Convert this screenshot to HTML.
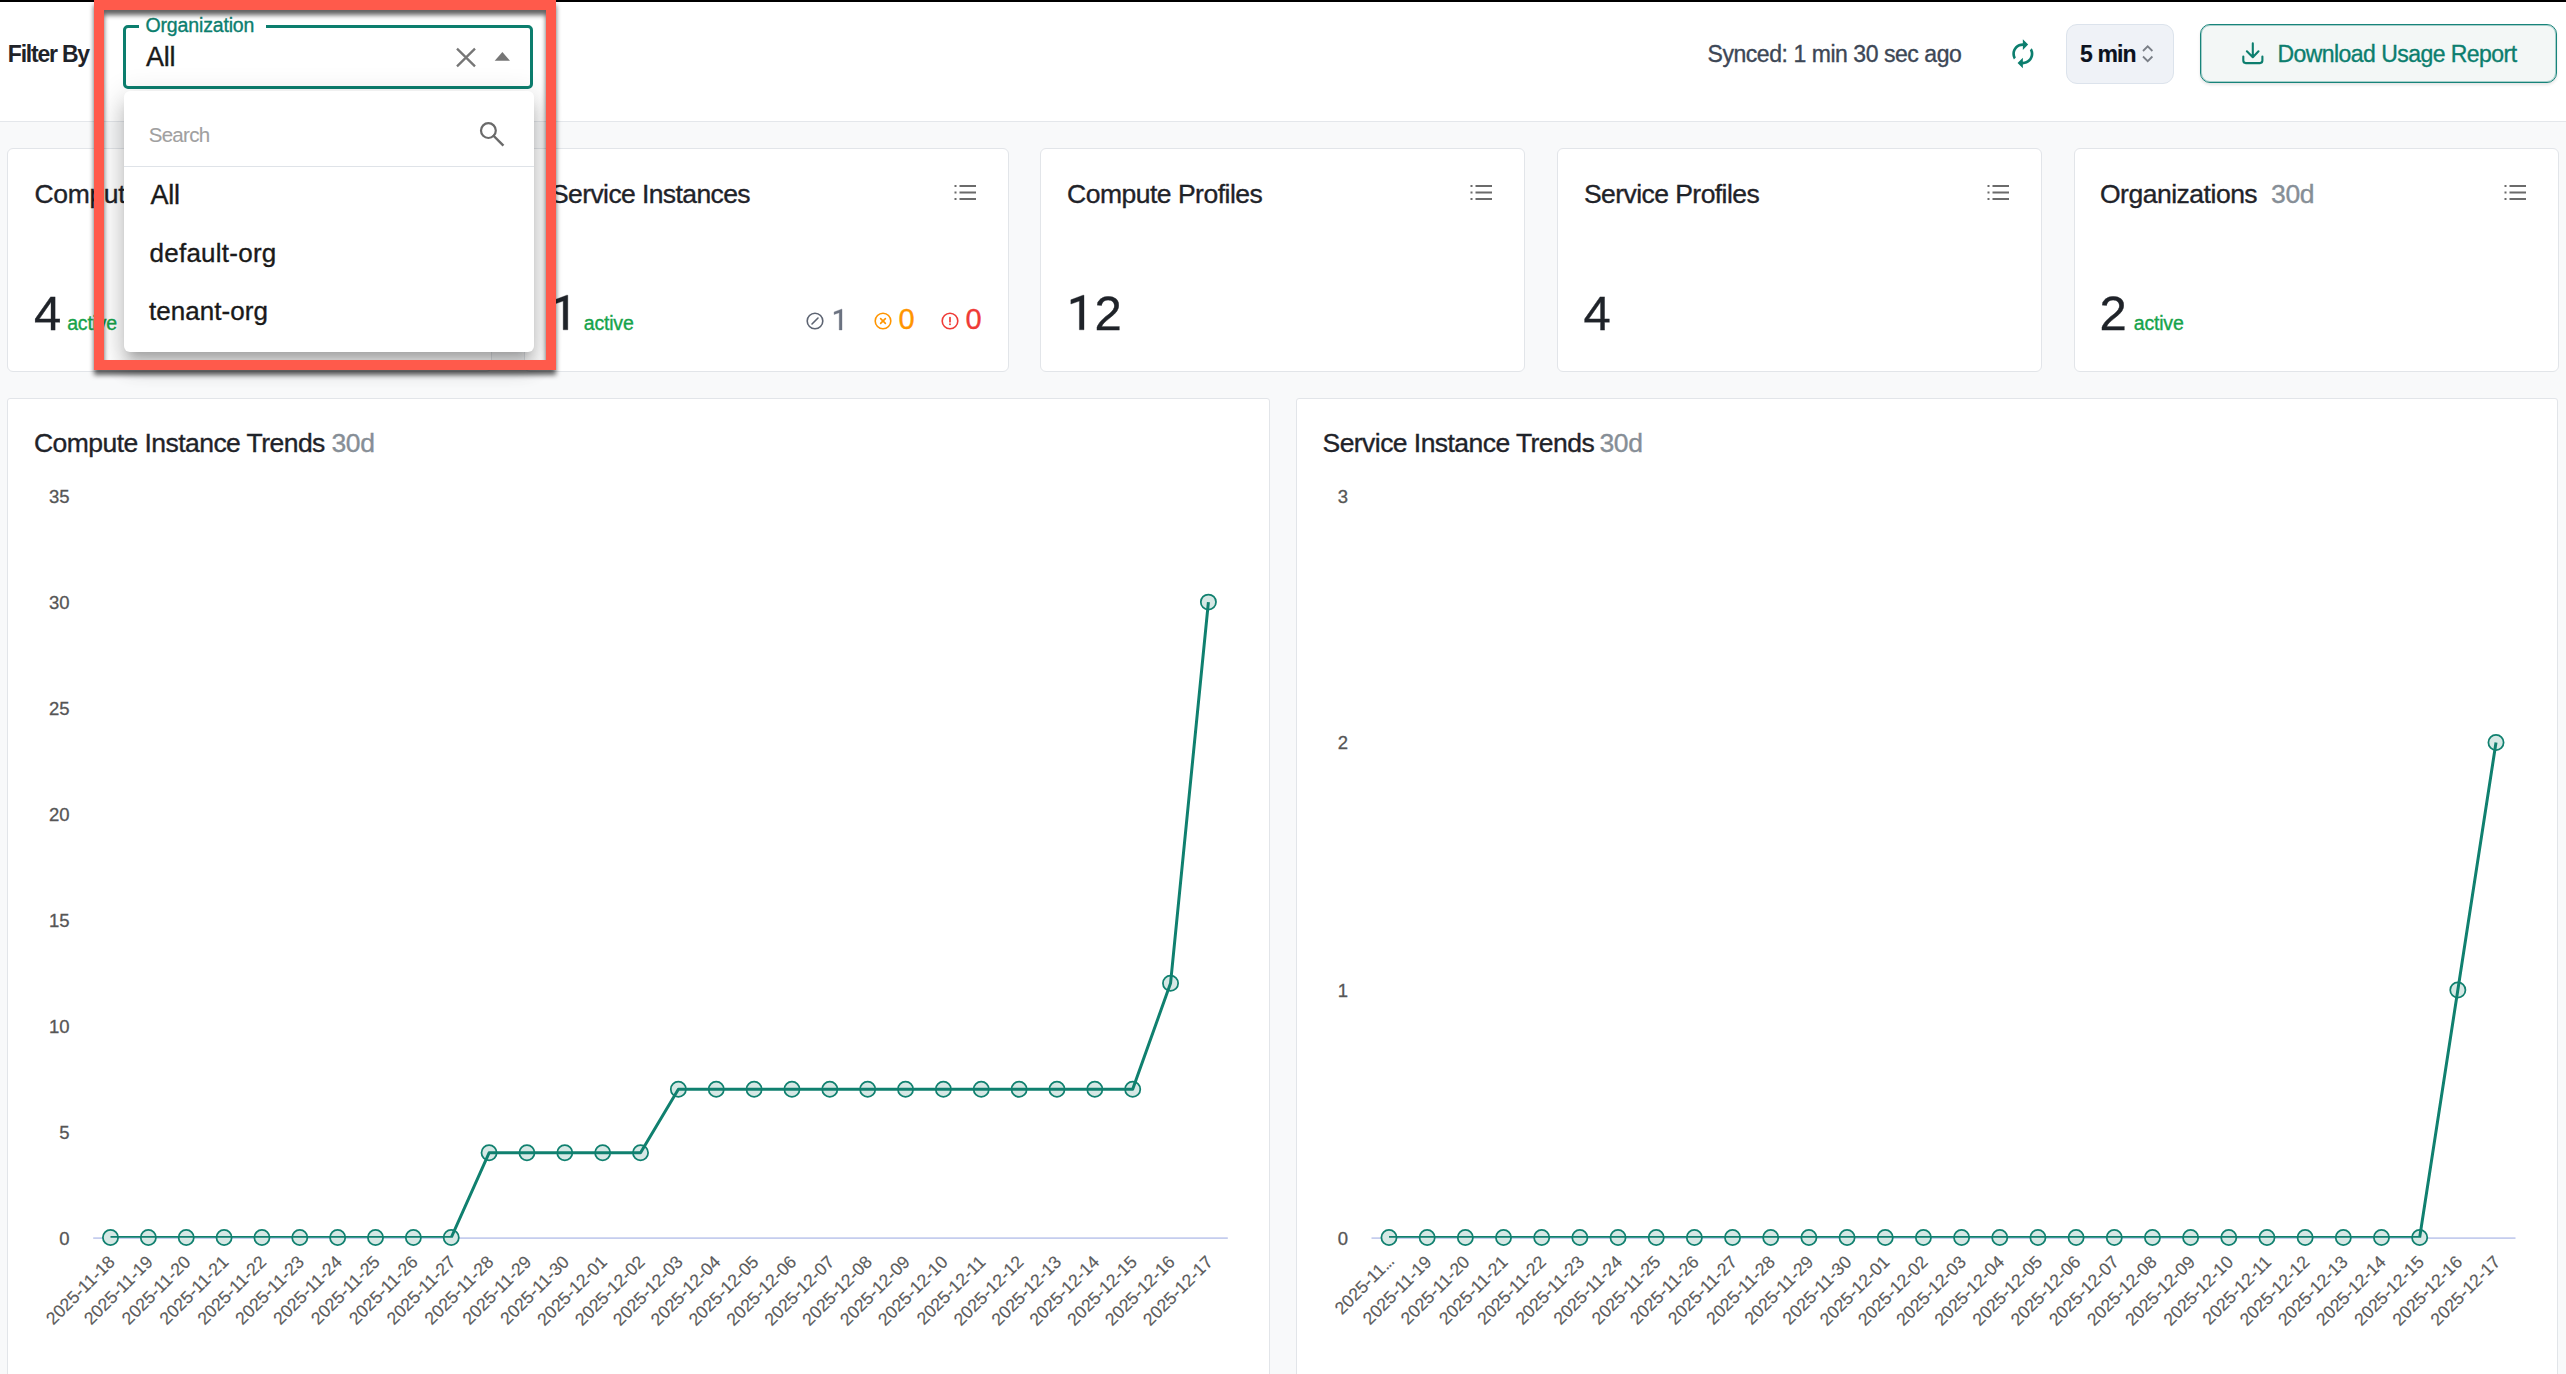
<!DOCTYPE html>
<html><head><meta charset="utf-8"><style>
html,body{margin:0;padding:0;width:2566px;height:1374px;overflow:hidden;background:#f8f9fa;font-family:"Liberation Sans",sans-serif;}
.a{position:absolute;box-sizing:content-box;}
.t{position:absolute;line-height:1;white-space:nowrap;font-family:"Liberation Sans",sans-serif;-webkit-text-stroke:0.35px currentColor;}
svg text{font-family:"Liberation Sans",sans-serif;}
</style></head><body>
<div class="a" style="left:0;top:0;width:2566px;height:2px;background:#000"></div>
<div class="a" style="left:0;top:2px;width:2566px;height:119px;background:#fff;border-bottom:1px solid #e4e7eb"></div>
<div class="t" style="left:7.8px;top:43.0px;font-size:23px;color:#1f2329;font-weight:bold;letter-spacing:-1.22px;-webkit-text-stroke:0">Filter By</div>

<div class="a" style="left:123px;top:25px;width:404px;height:58px;border:3px solid #0c7e6e;border-radius:5px;background:#fff"></div>
<div class="a" style="left:139px;top:20px;width:127px;height:10px;background:#fff"></div>
<div class="t" style="left:145.5px;top:15.5px;font-size:19.5px;color:#0c7e6e;font-weight:normal;letter-spacing:-0.15px;">Organization</div>

<div class="t" style="left:146.0px;top:44.2px;font-size:27px;color:#1a1a1a;font-weight:normal;letter-spacing:-0.3px;">All</div>

<svg class="a" style="left:455px;top:46px" width="22" height="23" viewBox="0 0 22 23"><path d="M2 2.6 L20 20.4 M20 2.6 L2 20.4" stroke="#767676" stroke-width="2.3" fill="none"/></svg>
<svg class="a" style="left:490px;top:48px" width="24" height="16" viewBox="0 0 24 16"><path d="M4.7 12.7 L20 12.7 L12.35 4.1 Z" fill="#767676"/></svg>
<div class="t" style="left:1707.5px;top:42.5px;font-size:23px;color:#3d4756;font-weight:normal;letter-spacing:-0.45px;">Synced: 1 min 30 sec ago</div>

<svg class="a" style="left:2006.7px;top:38.2px" width="31.7" height="31.7" viewBox="0 0 24 24"><path fill="#0c7e6e" d="M12 6v3l4-4-4-4v3c-4.42 0-8 3.58-8 8 0 1.57.46 3.03 1.24 4.26L6.7 14.8c-.45-.83-.7-1.79-.7-2.8 0-3.31 2.69-6 6-6zm6.76 1.74L17.3 9.2c.44.84.7 1.79.7 2.8 0 3.31-2.69 6-6 6v-3l-4 4 4 4v-3c4.42 0 8-3.58 8-8 0-1.57-.46-3.03-1.24-4.26z"/></svg>
<div class="a" style="left:2066px;top:24px;width:106px;height:58px;border:1px solid #dce3ec;border-radius:11px;background:#eff2f7"></div>
<div class="t" style="left:2080.0px;top:42.8px;font-size:23px;color:#0b1220;font-weight:bold;letter-spacing:-0.9px;-webkit-text-stroke:0.15px">5 min</div>

<svg class="a" style="left:2140px;top:42px" width="16" height="24" viewBox="0 0 16 24"><path d="M3 9 L7.7 4.3 L12.4 9 M3 14.5 L7.7 19.2 L12.4 14.5" stroke="#7a7f87" stroke-width="1.8" fill="none"/></svg>
<div class="a" style="left:2200px;top:24px;width:355px;height:57px;border:1px solid #17847a;border-radius:10px;background:#f3f7f6;box-shadow:inset 0 0 0 1px rgba(23,132,122,0.35),0 2px 3px rgba(0,0,0,0.10)"></div>
<svg class="a" style="left:2238px;top:38px" width="30" height="30" viewBox="2238 38 30 30"><path d="M2252.8 43.4 V57 M2246.9 51.3 L2252.8 57.2 L2258.5 51.3 M2243.3 56.5 V60.6 Q2243.3 63.1 2245.8 63.1 H2259.9 Q2262.4 63.1 2262.4 60.6 V56.5" stroke="#0c7e6e" stroke-width="2.1" fill="none" stroke-linecap="round" stroke-linejoin="round"/></svg>
<div class="t" style="left:2277.4px;top:42.8px;font-size:23px;color:#0c7e6e;font-weight:normal;letter-spacing:-0.545px;">Download Usage Report</div>

<div class="a" style="left:7px;top:148px;width:483px;height:222px;border:1px solid #e2e5e9;border-radius:6px;background:#fff"></div>
<div class="t" style="left:34.5px;top:181.0px;font-size:26.5px;color:#1f2329;font-weight:normal;letter-spacing:-0.35px;">Compute Instances</div>

<svg class="a" style="left:437px;top:183.8px" width="24" height="18" viewBox="0 0 24 18"><path d="M5.5 2 H22 M5.5 8.5 H22 M5.5 15 H22" stroke="#6b6b6b" stroke-width="2" fill="none"/><path d="M0.5 1 h2 v2 h-2z M0.5 7.5 h2 v2 h-2z M0.5 14 h2 v2 h-2z" fill="#6b6b6b"/></svg>
<div class="t" style="left:34.0px;top:288.7px;font-size:49px;color:#1f2329;font-weight:normal;letter-spacing:0px;">4</div>

<div class="t" style="left:67.2px;top:313.7px;font-size:19.5px;color:#16a34a;font-weight:normal;letter-spacing:-0.2px;">active</div>

<div class="a" style="left:524px;top:148px;width:483px;height:222px;border:1px solid #e2e5e9;border-radius:6px;background:#fff"></div>
<div class="t" style="left:551.0px;top:181.0px;font-size:26.5px;color:#1f2329;font-weight:normal;letter-spacing:-0.6px;">Service Instances</div>

<svg class="a" style="left:953.5px;top:183.8px" width="24" height="18" viewBox="0 0 24 18"><path d="M5.5 2 H22 M5.5 8.5 H22 M5.5 15 H22" stroke="#6b6b6b" stroke-width="2" fill="none"/><path d="M0.5 1 h2 v2 h-2z M0.5 7.5 h2 v2 h-2z M0.5 14 h2 v2 h-2z" fill="#6b6b6b"/></svg>
<svg class="a" style="left:552px;top:293px" width="18" height="39"><path d="M15.80 2.20 L15.80 36.80 L11.20 36.80 L11.20 8.08 L2.65 11.02 L2.65 6.80 L14.76 2.20Z" fill="#1f2329" stroke="#1f2329" stroke-width="0.35" stroke-linejoin="round"/></svg>
<div class="t" style="left:583.8px;top:313.7px;font-size:19.5px;color:#16a34a;font-weight:normal;letter-spacing:-0.2px;">active</div>

<div class="a" style="left:1040px;top:148px;width:483px;height:222px;border:1px solid #e2e5e9;border-radius:6px;background:#fff"></div>
<div class="t" style="left:1067.0px;top:181.0px;font-size:26.5px;color:#1f2329;font-weight:normal;letter-spacing:-0.5px;">Compute Profiles</div>

<svg class="a" style="left:1469.5px;top:183.8px" width="24" height="18" viewBox="0 0 24 18"><path d="M5.5 2 H22 M5.5 8.5 H22 M5.5 15 H22" stroke="#6b6b6b" stroke-width="2" fill="none"/><path d="M0.5 1 h2 v2 h-2z M0.5 7.5 h2 v2 h-2z M0.5 14 h2 v2 h-2z" fill="#6b6b6b"/></svg>
<svg class="a" style="left:1068px;top:293px" width="18" height="39"><path d="M16.00 2.20 L16.00 36.80 L11.40 36.80 L11.40 8.08 L2.85 11.02 L2.85 6.80 L14.96 2.20Z" fill="#1f2329" stroke="#1f2329" stroke-width="0.35" stroke-linejoin="round"/></svg>
<div class="t" style="left:1094.5px;top:288.7px;font-size:49px;color:#1f2329;font-weight:normal;letter-spacing:0px;">2</div>

<div class="a" style="left:1557px;top:148px;width:483px;height:222px;border:1px solid #e2e5e9;border-radius:6px;background:#fff"></div>
<div class="t" style="left:1584.0px;top:181.0px;font-size:26.5px;color:#1f2329;font-weight:normal;letter-spacing:-0.56px;">Service Profiles</div>

<svg class="a" style="left:1986.5px;top:183.8px" width="24" height="18" viewBox="0 0 24 18"><path d="M5.5 2 H22 M5.5 8.5 H22 M5.5 15 H22" stroke="#6b6b6b" stroke-width="2" fill="none"/><path d="M0.5 1 h2 v2 h-2z M0.5 7.5 h2 v2 h-2z M0.5 14 h2 v2 h-2z" fill="#6b6b6b"/></svg>
<div class="t" style="left:1583.5px;top:288.7px;font-size:49px;color:#1f2329;font-weight:normal;letter-spacing:0px;">4</div>

<div class="a" style="left:2074px;top:148px;width:483px;height:222px;border:1px solid #e2e5e9;border-radius:6px;background:#fff"></div>
<div class="t" style="left:2100.0px;top:181.0px;font-size:26.5px;color:#1f2329;font-weight:normal;letter-spacing:-0.49px;">Organizations</div>

<div class="t" style="left:2271.0px;top:181.0px;font-size:26.5px;color:#868e96;font-weight:normal;letter-spacing:-0.35px;">30d</div>

<svg class="a" style="left:2503.5px;top:183.8px" width="24" height="18" viewBox="0 0 24 18"><path d="M5.5 2 H22 M5.5 8.5 H22 M5.5 15 H22" stroke="#6b6b6b" stroke-width="2" fill="none"/><path d="M0.5 1 h2 v2 h-2z M0.5 7.5 h2 v2 h-2z M0.5 14 h2 v2 h-2z" fill="#6b6b6b"/></svg>
<div class="t" style="left:2099.5px;top:288.7px;font-size:49px;color:#1f2329;font-weight:normal;letter-spacing:0px;">2</div>

<div class="t" style="left:2133.8px;top:313.7px;font-size:19.5px;color:#16a34a;font-weight:normal;letter-spacing:-0.2px;">active</div>

<svg class="a" style="left:804.5px;top:310.5px" width="20" height="20" viewBox="0 0 20 20"><circle cx="10" cy="10" r="7.8" stroke="#5d6472" stroke-width="1.6" fill="none"/><path d="M7 13 L13 7" stroke="#5d6472" stroke-width="1.6" stroke-linecap="round"/></svg>
<svg class="a" style="left:832px;top:307px" width="12" height="25"><path d="M10.00 2.20 L10.00 23.00 L7.23 23.00 L7.23 5.74 L2.10 7.50 L2.10 4.97 L9.38 2.20Z" fill="#6b7280" stroke="#6b7280" stroke-width="0.35" stroke-linejoin="round"/></svg>
<svg class="a" style="left:872.5px;top:310.5px" width="20" height="20" viewBox="0 0 20 20"><circle cx="10" cy="10" r="7.8" stroke="#ff9500" stroke-width="1.6" fill="none"/><path d="M7.6 7.6 L12.4 12.4 M12.4 7.6 L7.6 12.4" stroke="#ff9500" stroke-width="1.6" stroke-linecap="round"/></svg>
<div class="t" style="left:898.5px;top:305.4px;font-size:29px;color:#ff9500;font-weight:normal;letter-spacing:0px;">0</div>

<svg class="a" style="left:939.6px;top:310.5px" width="20" height="20" viewBox="0 0 20 20"><circle cx="10" cy="10" r="7.8" stroke="#ef3b36" stroke-width="1.6" fill="none"/><path d="M10 6.5 V10.8" stroke="#ef3b36" stroke-width="1.7" stroke-linecap="round"/><circle cx="10" cy="13.2" r="0.95" fill="#ef3b36"/></svg>
<div class="t" style="left:965.5px;top:305.4px;font-size:29px;color:#ef3b36;font-weight:normal;letter-spacing:0px;">0</div>

<div class="a" style="left:7px;top:398px;width:1261px;height:1000px;border:1px solid #e2e5e9;border-radius:3px;background:#fff"></div>
<div class="a" style="left:1296px;top:398px;width:1260px;height:1000px;border:1px solid #e2e5e9;border-radius:3px;background:#fff"></div>
<div class="t" style="left:34.0px;top:429.5px;font-size:26.5px;color:#1f2329;font-weight:normal;letter-spacing:-0.55px;">Compute Instance Trends</div>

<div class="t" style="left:331.5px;top:429.5px;font-size:26.5px;color:#868e96;font-weight:normal;letter-spacing:-0.4px;">30d</div>

<div class="t" style="left:1322.5px;top:429.5px;font-size:26.5px;color:#1f2329;font-weight:normal;letter-spacing:-0.55px;">Service Instance Trends</div>

<div class="t" style="left:1599.5px;top:429.5px;font-size:26.5px;color:#868e96;font-weight:normal;letter-spacing:-0.4px;">30d</div>

<svg class="a" style="left:0;top:0" width="2566" height="1374" viewBox="0 0 2566 1374">
<text x="69.5" y="1244.7" text-anchor="end" font-size="18.5" fill="#565656" stroke="#565656" stroke-width="0.3" font-family="Liberation Sans">0</text>
<text x="69.5" y="1138.8" text-anchor="end" font-size="18.5" fill="#565656" stroke="#565656" stroke-width="0.3" font-family="Liberation Sans">5</text>
<text x="69.5" y="1032.9" text-anchor="end" font-size="18.5" fill="#565656" stroke="#565656" stroke-width="0.3" font-family="Liberation Sans">10</text>
<text x="69.5" y="927.0" text-anchor="end" font-size="18.5" fill="#565656" stroke="#565656" stroke-width="0.3" font-family="Liberation Sans">15</text>
<text x="69.5" y="821.1" text-anchor="end" font-size="18.5" fill="#565656" stroke="#565656" stroke-width="0.3" font-family="Liberation Sans">20</text>
<text x="69.5" y="715.2" text-anchor="end" font-size="18.5" fill="#565656" stroke="#565656" stroke-width="0.3" font-family="Liberation Sans">25</text>
<text x="69.5" y="609.3" text-anchor="end" font-size="18.5" fill="#565656" stroke="#565656" stroke-width="0.3" font-family="Liberation Sans">30</text>
<text x="69.5" y="503.4" text-anchor="end" font-size="18.5" fill="#565656" stroke="#565656" stroke-width="0.3" font-family="Liberation Sans">35</text>
<line x1="93.2" y1="1238.1" x2="1227.8" y2="1238.1" stroke="#c5cdee" stroke-width="1.6"/>
<circle cx="110.50" cy="1237.50" r="7.6" fill="#d6e8e5" stroke="#10806f" stroke-width="1.75"/>
<circle cx="148.36" cy="1237.50" r="7.6" fill="#d6e8e5" stroke="#10806f" stroke-width="1.75"/>
<circle cx="186.22" cy="1237.50" r="7.6" fill="#d6e8e5" stroke="#10806f" stroke-width="1.75"/>
<circle cx="224.08" cy="1237.50" r="7.6" fill="#d6e8e5" stroke="#10806f" stroke-width="1.75"/>
<circle cx="261.93" cy="1237.50" r="7.6" fill="#d6e8e5" stroke="#10806f" stroke-width="1.75"/>
<circle cx="299.79" cy="1237.50" r="7.6" fill="#d6e8e5" stroke="#10806f" stroke-width="1.75"/>
<circle cx="337.65" cy="1237.50" r="7.6" fill="#d6e8e5" stroke="#10806f" stroke-width="1.75"/>
<circle cx="375.51" cy="1237.50" r="7.6" fill="#d6e8e5" stroke="#10806f" stroke-width="1.75"/>
<circle cx="413.37" cy="1237.50" r="7.6" fill="#d6e8e5" stroke="#10806f" stroke-width="1.75"/>
<circle cx="451.23" cy="1237.50" r="7.6" fill="#d6e8e5" stroke="#10806f" stroke-width="1.75"/>
<circle cx="489.09" cy="1152.78" r="7.6" fill="#d6e8e5" stroke="#10806f" stroke-width="1.75"/>
<circle cx="526.94" cy="1152.78" r="7.6" fill="#d6e8e5" stroke="#10806f" stroke-width="1.75"/>
<circle cx="564.80" cy="1152.78" r="7.6" fill="#d6e8e5" stroke="#10806f" stroke-width="1.75"/>
<circle cx="602.66" cy="1152.78" r="7.6" fill="#d6e8e5" stroke="#10806f" stroke-width="1.75"/>
<circle cx="640.52" cy="1152.78" r="7.6" fill="#d6e8e5" stroke="#10806f" stroke-width="1.75"/>
<circle cx="678.38" cy="1089.24" r="7.6" fill="#d6e8e5" stroke="#10806f" stroke-width="1.75"/>
<circle cx="716.24" cy="1089.24" r="7.6" fill="#d6e8e5" stroke="#10806f" stroke-width="1.75"/>
<circle cx="754.10" cy="1089.24" r="7.6" fill="#d6e8e5" stroke="#10806f" stroke-width="1.75"/>
<circle cx="791.96" cy="1089.24" r="7.6" fill="#d6e8e5" stroke="#10806f" stroke-width="1.75"/>
<circle cx="829.81" cy="1089.24" r="7.6" fill="#d6e8e5" stroke="#10806f" stroke-width="1.75"/>
<circle cx="867.67" cy="1089.24" r="7.6" fill="#d6e8e5" stroke="#10806f" stroke-width="1.75"/>
<circle cx="905.53" cy="1089.24" r="7.6" fill="#d6e8e5" stroke="#10806f" stroke-width="1.75"/>
<circle cx="943.39" cy="1089.24" r="7.6" fill="#d6e8e5" stroke="#10806f" stroke-width="1.75"/>
<circle cx="981.25" cy="1089.24" r="7.6" fill="#d6e8e5" stroke="#10806f" stroke-width="1.75"/>
<circle cx="1019.11" cy="1089.24" r="7.6" fill="#d6e8e5" stroke="#10806f" stroke-width="1.75"/>
<circle cx="1056.97" cy="1089.24" r="7.6" fill="#d6e8e5" stroke="#10806f" stroke-width="1.75"/>
<circle cx="1094.82" cy="1089.24" r="7.6" fill="#d6e8e5" stroke="#10806f" stroke-width="1.75"/>
<circle cx="1132.68" cy="1089.24" r="7.6" fill="#d6e8e5" stroke="#10806f" stroke-width="1.75"/>
<circle cx="1170.54" cy="983.34" r="7.6" fill="#d6e8e5" stroke="#10806f" stroke-width="1.75"/>
<circle cx="1208.40" cy="602.10" r="7.6" fill="#d6e8e5" stroke="#10806f" stroke-width="1.75"/>
<clipPath id="clip93"><rect x="93.2" y="470" width="1134.6" height="767.7"/></clipPath>
<path d="M110.50 1237.50 L148.36 1237.50 L186.22 1237.50 L224.08 1237.50 L261.93 1237.50 L299.79 1237.50 L337.65 1237.50 L375.51 1237.50 L413.37 1237.50 L451.23 1237.50 L489.09 1152.78 L526.94 1152.78 L564.80 1152.78 L602.66 1152.78 L640.52 1152.78 L678.38 1089.24 L716.24 1089.24 L754.10 1089.24 L791.96 1089.24 L829.81 1089.24 L867.67 1089.24 L905.53 1089.24 L943.39 1089.24 L981.25 1089.24 L1019.11 1089.24 L1056.97 1089.24 L1094.82 1089.24 L1132.68 1089.24 L1170.54 983.34 L1208.40 602.10" stroke="#10806f" stroke-width="3" fill="none" stroke-linejoin="round" clip-path="url(#clip93)"/>
<text x="116.0" y="1263.0" text-anchor="end" font-size="17.6" fill="#5c5c5c" stroke="#5c5c5c" stroke-width="0.15" font-family="Liberation Sans" transform="rotate(-45 116.0 1263.0)">2025-11-18</text>
<text x="153.9" y="1263.0" text-anchor="end" font-size="17.6" fill="#5c5c5c" stroke="#5c5c5c" stroke-width="0.15" font-family="Liberation Sans" transform="rotate(-45 153.9 1263.0)">2025-11-19</text>
<text x="191.7" y="1263.0" text-anchor="end" font-size="17.6" fill="#5c5c5c" stroke="#5c5c5c" stroke-width="0.15" font-family="Liberation Sans" transform="rotate(-45 191.7 1263.0)">2025-11-20</text>
<text x="229.6" y="1263.0" text-anchor="end" font-size="17.6" fill="#5c5c5c" stroke="#5c5c5c" stroke-width="0.15" font-family="Liberation Sans" transform="rotate(-45 229.6 1263.0)">2025-11-21</text>
<text x="267.4" y="1263.0" text-anchor="end" font-size="17.6" fill="#5c5c5c" stroke="#5c5c5c" stroke-width="0.15" font-family="Liberation Sans" transform="rotate(-45 267.4 1263.0)">2025-11-22</text>
<text x="305.3" y="1263.0" text-anchor="end" font-size="17.6" fill="#5c5c5c" stroke="#5c5c5c" stroke-width="0.15" font-family="Liberation Sans" transform="rotate(-45 305.3 1263.0)">2025-11-23</text>
<text x="343.2" y="1263.0" text-anchor="end" font-size="17.6" fill="#5c5c5c" stroke="#5c5c5c" stroke-width="0.15" font-family="Liberation Sans" transform="rotate(-45 343.2 1263.0)">2025-11-24</text>
<text x="381.0" y="1263.0" text-anchor="end" font-size="17.6" fill="#5c5c5c" stroke="#5c5c5c" stroke-width="0.15" font-family="Liberation Sans" transform="rotate(-45 381.0 1263.0)">2025-11-25</text>
<text x="418.9" y="1263.0" text-anchor="end" font-size="17.6" fill="#5c5c5c" stroke="#5c5c5c" stroke-width="0.15" font-family="Liberation Sans" transform="rotate(-45 418.9 1263.0)">2025-11-26</text>
<text x="456.7" y="1263.0" text-anchor="end" font-size="17.6" fill="#5c5c5c" stroke="#5c5c5c" stroke-width="0.15" font-family="Liberation Sans" transform="rotate(-45 456.7 1263.0)">2025-11-27</text>
<text x="494.6" y="1263.0" text-anchor="end" font-size="17.6" fill="#5c5c5c" stroke="#5c5c5c" stroke-width="0.15" font-family="Liberation Sans" transform="rotate(-45 494.6 1263.0)">2025-11-28</text>
<text x="532.4" y="1263.0" text-anchor="end" font-size="17.6" fill="#5c5c5c" stroke="#5c5c5c" stroke-width="0.15" font-family="Liberation Sans" transform="rotate(-45 532.4 1263.0)">2025-11-29</text>
<text x="570.3" y="1263.0" text-anchor="end" font-size="17.6" fill="#5c5c5c" stroke="#5c5c5c" stroke-width="0.15" font-family="Liberation Sans" transform="rotate(-45 570.3 1263.0)">2025-11-30</text>
<text x="608.2" y="1263.0" text-anchor="end" font-size="17.6" fill="#5c5c5c" stroke="#5c5c5c" stroke-width="0.15" font-family="Liberation Sans" transform="rotate(-45 608.2 1263.0)">2025-12-01</text>
<text x="646.0" y="1263.0" text-anchor="end" font-size="17.6" fill="#5c5c5c" stroke="#5c5c5c" stroke-width="0.15" font-family="Liberation Sans" transform="rotate(-45 646.0 1263.0)">2025-12-02</text>
<text x="683.9" y="1263.0" text-anchor="end" font-size="17.6" fill="#5c5c5c" stroke="#5c5c5c" stroke-width="0.15" font-family="Liberation Sans" transform="rotate(-45 683.9 1263.0)">2025-12-03</text>
<text x="721.7" y="1263.0" text-anchor="end" font-size="17.6" fill="#5c5c5c" stroke="#5c5c5c" stroke-width="0.15" font-family="Liberation Sans" transform="rotate(-45 721.7 1263.0)">2025-12-04</text>
<text x="759.6" y="1263.0" text-anchor="end" font-size="17.6" fill="#5c5c5c" stroke="#5c5c5c" stroke-width="0.15" font-family="Liberation Sans" transform="rotate(-45 759.6 1263.0)">2025-12-05</text>
<text x="797.5" y="1263.0" text-anchor="end" font-size="17.6" fill="#5c5c5c" stroke="#5c5c5c" stroke-width="0.15" font-family="Liberation Sans" transform="rotate(-45 797.5 1263.0)">2025-12-06</text>
<text x="835.3" y="1263.0" text-anchor="end" font-size="17.6" fill="#5c5c5c" stroke="#5c5c5c" stroke-width="0.15" font-family="Liberation Sans" transform="rotate(-45 835.3 1263.0)">2025-12-07</text>
<text x="873.2" y="1263.0" text-anchor="end" font-size="17.6" fill="#5c5c5c" stroke="#5c5c5c" stroke-width="0.15" font-family="Liberation Sans" transform="rotate(-45 873.2 1263.0)">2025-12-08</text>
<text x="911.0" y="1263.0" text-anchor="end" font-size="17.6" fill="#5c5c5c" stroke="#5c5c5c" stroke-width="0.15" font-family="Liberation Sans" transform="rotate(-45 911.0 1263.0)">2025-12-09</text>
<text x="948.9" y="1263.0" text-anchor="end" font-size="17.6" fill="#5c5c5c" stroke="#5c5c5c" stroke-width="0.15" font-family="Liberation Sans" transform="rotate(-45 948.9 1263.0)">2025-12-10</text>
<text x="986.7" y="1263.0" text-anchor="end" font-size="17.6" fill="#5c5c5c" stroke="#5c5c5c" stroke-width="0.15" font-family="Liberation Sans" transform="rotate(-45 986.7 1263.0)">2025-12-11</text>
<text x="1024.6" y="1263.0" text-anchor="end" font-size="17.6" fill="#5c5c5c" stroke="#5c5c5c" stroke-width="0.15" font-family="Liberation Sans" transform="rotate(-45 1024.6 1263.0)">2025-12-12</text>
<text x="1062.5" y="1263.0" text-anchor="end" font-size="17.6" fill="#5c5c5c" stroke="#5c5c5c" stroke-width="0.15" font-family="Liberation Sans" transform="rotate(-45 1062.5 1263.0)">2025-12-13</text>
<text x="1100.3" y="1263.0" text-anchor="end" font-size="17.6" fill="#5c5c5c" stroke="#5c5c5c" stroke-width="0.15" font-family="Liberation Sans" transform="rotate(-45 1100.3 1263.0)">2025-12-14</text>
<text x="1138.2" y="1263.0" text-anchor="end" font-size="17.6" fill="#5c5c5c" stroke="#5c5c5c" stroke-width="0.15" font-family="Liberation Sans" transform="rotate(-45 1138.2 1263.0)">2025-12-15</text>
<text x="1176.0" y="1263.0" text-anchor="end" font-size="17.6" fill="#5c5c5c" stroke="#5c5c5c" stroke-width="0.15" font-family="Liberation Sans" transform="rotate(-45 1176.0 1263.0)">2025-12-16</text>
<text x="1213.9" y="1263.0" text-anchor="end" font-size="17.6" fill="#5c5c5c" stroke="#5c5c5c" stroke-width="0.15" font-family="Liberation Sans" transform="rotate(-45 1213.9 1263.0)">2025-12-17</text>
</svg>
<svg class="a" style="left:0;top:0" width="2566" height="1374" viewBox="0 0 2566 1374">
<text x="1348" y="1244.8" text-anchor="end" font-size="18.5" fill="#565656" stroke="#565656" stroke-width="0.3" font-family="Liberation Sans">0</text>
<text x="1348" y="997.3" text-anchor="end" font-size="18.5" fill="#565656" stroke="#565656" stroke-width="0.3" font-family="Liberation Sans">1</text>
<text x="1348" y="749.3" text-anchor="end" font-size="18.5" fill="#565656" stroke="#565656" stroke-width="0.3" font-family="Liberation Sans">2</text>
<text x="1348" y="503.1" text-anchor="end" font-size="18.5" fill="#565656" stroke="#565656" stroke-width="0.3" font-family="Liberation Sans">3</text>
<line x1="1371.5" y1="1238.1" x2="2515.5" y2="1238.1" stroke="#c5cdee" stroke-width="1.6"/>
<circle cx="1389.00" cy="1237.50" r="7.6" fill="#d6e8e5" stroke="#10806f" stroke-width="1.75"/>
<circle cx="1427.17" cy="1237.50" r="7.6" fill="#d6e8e5" stroke="#10806f" stroke-width="1.75"/>
<circle cx="1465.34" cy="1237.50" r="7.6" fill="#d6e8e5" stroke="#10806f" stroke-width="1.75"/>
<circle cx="1503.52" cy="1237.50" r="7.6" fill="#d6e8e5" stroke="#10806f" stroke-width="1.75"/>
<circle cx="1541.69" cy="1237.50" r="7.6" fill="#d6e8e5" stroke="#10806f" stroke-width="1.75"/>
<circle cx="1579.86" cy="1237.50" r="7.6" fill="#d6e8e5" stroke="#10806f" stroke-width="1.75"/>
<circle cx="1618.03" cy="1237.50" r="7.6" fill="#d6e8e5" stroke="#10806f" stroke-width="1.75"/>
<circle cx="1656.21" cy="1237.50" r="7.6" fill="#d6e8e5" stroke="#10806f" stroke-width="1.75"/>
<circle cx="1694.38" cy="1237.50" r="7.6" fill="#d6e8e5" stroke="#10806f" stroke-width="1.75"/>
<circle cx="1732.55" cy="1237.50" r="7.6" fill="#d6e8e5" stroke="#10806f" stroke-width="1.75"/>
<circle cx="1770.72" cy="1237.50" r="7.6" fill="#d6e8e5" stroke="#10806f" stroke-width="1.75"/>
<circle cx="1808.90" cy="1237.50" r="7.6" fill="#d6e8e5" stroke="#10806f" stroke-width="1.75"/>
<circle cx="1847.07" cy="1237.50" r="7.6" fill="#d6e8e5" stroke="#10806f" stroke-width="1.75"/>
<circle cx="1885.24" cy="1237.50" r="7.6" fill="#d6e8e5" stroke="#10806f" stroke-width="1.75"/>
<circle cx="1923.41" cy="1237.50" r="7.6" fill="#d6e8e5" stroke="#10806f" stroke-width="1.75"/>
<circle cx="1961.59" cy="1237.50" r="7.6" fill="#d6e8e5" stroke="#10806f" stroke-width="1.75"/>
<circle cx="1999.76" cy="1237.50" r="7.6" fill="#d6e8e5" stroke="#10806f" stroke-width="1.75"/>
<circle cx="2037.93" cy="1237.50" r="7.6" fill="#d6e8e5" stroke="#10806f" stroke-width="1.75"/>
<circle cx="2076.10" cy="1237.50" r="7.6" fill="#d6e8e5" stroke="#10806f" stroke-width="1.75"/>
<circle cx="2114.28" cy="1237.50" r="7.6" fill="#d6e8e5" stroke="#10806f" stroke-width="1.75"/>
<circle cx="2152.45" cy="1237.50" r="7.6" fill="#d6e8e5" stroke="#10806f" stroke-width="1.75"/>
<circle cx="2190.62" cy="1237.50" r="7.6" fill="#d6e8e5" stroke="#10806f" stroke-width="1.75"/>
<circle cx="2228.79" cy="1237.50" r="7.6" fill="#d6e8e5" stroke="#10806f" stroke-width="1.75"/>
<circle cx="2266.97" cy="1237.50" r="7.6" fill="#d6e8e5" stroke="#10806f" stroke-width="1.75"/>
<circle cx="2305.14" cy="1237.50" r="7.6" fill="#d6e8e5" stroke="#10806f" stroke-width="1.75"/>
<circle cx="2343.31" cy="1237.50" r="7.6" fill="#d6e8e5" stroke="#10806f" stroke-width="1.75"/>
<circle cx="2381.48" cy="1237.50" r="7.6" fill="#d6e8e5" stroke="#10806f" stroke-width="1.75"/>
<circle cx="2419.66" cy="1237.50" r="7.6" fill="#d6e8e5" stroke="#10806f" stroke-width="1.75"/>
<circle cx="2457.83" cy="990.00" r="7.6" fill="#d6e8e5" stroke="#10806f" stroke-width="1.75"/>
<circle cx="2496.00" cy="742.50" r="7.6" fill="#d6e8e5" stroke="#10806f" stroke-width="1.75"/>
<clipPath id="clip1371"><rect x="1371.5" y="470" width="1144.0" height="767.7"/></clipPath>
<path d="M1389.00 1237.50 L1427.17 1237.50 L1465.34 1237.50 L1503.52 1237.50 L1541.69 1237.50 L1579.86 1237.50 L1618.03 1237.50 L1656.21 1237.50 L1694.38 1237.50 L1732.55 1237.50 L1770.72 1237.50 L1808.90 1237.50 L1847.07 1237.50 L1885.24 1237.50 L1923.41 1237.50 L1961.59 1237.50 L1999.76 1237.50 L2037.93 1237.50 L2076.10 1237.50 L2114.28 1237.50 L2152.45 1237.50 L2190.62 1237.50 L2228.79 1237.50 L2266.97 1237.50 L2305.14 1237.50 L2343.31 1237.50 L2381.48 1237.50 L2419.66 1237.50 L2457.83 990.00 L2496.00 742.50" stroke="#10806f" stroke-width="3" fill="none" stroke-linejoin="round" clip-path="url(#clip1371)"/>
<text x="1394.5" y="1263.0" text-anchor="end" font-size="17.6" fill="#5c5c5c" stroke="#5c5c5c" stroke-width="0.15" font-family="Liberation Sans" transform="rotate(-45 1394.5 1263.0)">2025-11<tspan letter-spacing="-1.2">...</tspan></text>
<text x="1432.7" y="1263.0" text-anchor="end" font-size="17.6" fill="#5c5c5c" stroke="#5c5c5c" stroke-width="0.15" font-family="Liberation Sans" transform="rotate(-45 1432.7 1263.0)">2025-11-19</text>
<text x="1470.8" y="1263.0" text-anchor="end" font-size="17.6" fill="#5c5c5c" stroke="#5c5c5c" stroke-width="0.15" font-family="Liberation Sans" transform="rotate(-45 1470.8 1263.0)">2025-11-20</text>
<text x="1509.0" y="1263.0" text-anchor="end" font-size="17.6" fill="#5c5c5c" stroke="#5c5c5c" stroke-width="0.15" font-family="Liberation Sans" transform="rotate(-45 1509.0 1263.0)">2025-11-21</text>
<text x="1547.2" y="1263.0" text-anchor="end" font-size="17.6" fill="#5c5c5c" stroke="#5c5c5c" stroke-width="0.15" font-family="Liberation Sans" transform="rotate(-45 1547.2 1263.0)">2025-11-22</text>
<text x="1585.4" y="1263.0" text-anchor="end" font-size="17.6" fill="#5c5c5c" stroke="#5c5c5c" stroke-width="0.15" font-family="Liberation Sans" transform="rotate(-45 1585.4 1263.0)">2025-11-23</text>
<text x="1623.5" y="1263.0" text-anchor="end" font-size="17.6" fill="#5c5c5c" stroke="#5c5c5c" stroke-width="0.15" font-family="Liberation Sans" transform="rotate(-45 1623.5 1263.0)">2025-11-24</text>
<text x="1661.7" y="1263.0" text-anchor="end" font-size="17.6" fill="#5c5c5c" stroke="#5c5c5c" stroke-width="0.15" font-family="Liberation Sans" transform="rotate(-45 1661.7 1263.0)">2025-11-25</text>
<text x="1699.9" y="1263.0" text-anchor="end" font-size="17.6" fill="#5c5c5c" stroke="#5c5c5c" stroke-width="0.15" font-family="Liberation Sans" transform="rotate(-45 1699.9 1263.0)">2025-11-26</text>
<text x="1738.1" y="1263.0" text-anchor="end" font-size="17.6" fill="#5c5c5c" stroke="#5c5c5c" stroke-width="0.15" font-family="Liberation Sans" transform="rotate(-45 1738.1 1263.0)">2025-11-27</text>
<text x="1776.2" y="1263.0" text-anchor="end" font-size="17.6" fill="#5c5c5c" stroke="#5c5c5c" stroke-width="0.15" font-family="Liberation Sans" transform="rotate(-45 1776.2 1263.0)">2025-11-28</text>
<text x="1814.4" y="1263.0" text-anchor="end" font-size="17.6" fill="#5c5c5c" stroke="#5c5c5c" stroke-width="0.15" font-family="Liberation Sans" transform="rotate(-45 1814.4 1263.0)">2025-11-29</text>
<text x="1852.6" y="1263.0" text-anchor="end" font-size="17.6" fill="#5c5c5c" stroke="#5c5c5c" stroke-width="0.15" font-family="Liberation Sans" transform="rotate(-45 1852.6 1263.0)">2025-11-30</text>
<text x="1890.7" y="1263.0" text-anchor="end" font-size="17.6" fill="#5c5c5c" stroke="#5c5c5c" stroke-width="0.15" font-family="Liberation Sans" transform="rotate(-45 1890.7 1263.0)">2025-12-01</text>
<text x="1928.9" y="1263.0" text-anchor="end" font-size="17.6" fill="#5c5c5c" stroke="#5c5c5c" stroke-width="0.15" font-family="Liberation Sans" transform="rotate(-45 1928.9 1263.0)">2025-12-02</text>
<text x="1967.1" y="1263.0" text-anchor="end" font-size="17.6" fill="#5c5c5c" stroke="#5c5c5c" stroke-width="0.15" font-family="Liberation Sans" transform="rotate(-45 1967.1 1263.0)">2025-12-03</text>
<text x="2005.3" y="1263.0" text-anchor="end" font-size="17.6" fill="#5c5c5c" stroke="#5c5c5c" stroke-width="0.15" font-family="Liberation Sans" transform="rotate(-45 2005.3 1263.0)">2025-12-04</text>
<text x="2043.4" y="1263.0" text-anchor="end" font-size="17.6" fill="#5c5c5c" stroke="#5c5c5c" stroke-width="0.15" font-family="Liberation Sans" transform="rotate(-45 2043.4 1263.0)">2025-12-05</text>
<text x="2081.6" y="1263.0" text-anchor="end" font-size="17.6" fill="#5c5c5c" stroke="#5c5c5c" stroke-width="0.15" font-family="Liberation Sans" transform="rotate(-45 2081.6 1263.0)">2025-12-06</text>
<text x="2119.8" y="1263.0" text-anchor="end" font-size="17.6" fill="#5c5c5c" stroke="#5c5c5c" stroke-width="0.15" font-family="Liberation Sans" transform="rotate(-45 2119.8 1263.0)">2025-12-07</text>
<text x="2157.9" y="1263.0" text-anchor="end" font-size="17.6" fill="#5c5c5c" stroke="#5c5c5c" stroke-width="0.15" font-family="Liberation Sans" transform="rotate(-45 2157.9 1263.0)">2025-12-08</text>
<text x="2196.1" y="1263.0" text-anchor="end" font-size="17.6" fill="#5c5c5c" stroke="#5c5c5c" stroke-width="0.15" font-family="Liberation Sans" transform="rotate(-45 2196.1 1263.0)">2025-12-09</text>
<text x="2234.3" y="1263.0" text-anchor="end" font-size="17.6" fill="#5c5c5c" stroke="#5c5c5c" stroke-width="0.15" font-family="Liberation Sans" transform="rotate(-45 2234.3 1263.0)">2025-12-10</text>
<text x="2272.5" y="1263.0" text-anchor="end" font-size="17.6" fill="#5c5c5c" stroke="#5c5c5c" stroke-width="0.15" font-family="Liberation Sans" transform="rotate(-45 2272.5 1263.0)">2025-12-11</text>
<text x="2310.6" y="1263.0" text-anchor="end" font-size="17.6" fill="#5c5c5c" stroke="#5c5c5c" stroke-width="0.15" font-family="Liberation Sans" transform="rotate(-45 2310.6 1263.0)">2025-12-12</text>
<text x="2348.8" y="1263.0" text-anchor="end" font-size="17.6" fill="#5c5c5c" stroke="#5c5c5c" stroke-width="0.15" font-family="Liberation Sans" transform="rotate(-45 2348.8 1263.0)">2025-12-13</text>
<text x="2387.0" y="1263.0" text-anchor="end" font-size="17.6" fill="#5c5c5c" stroke="#5c5c5c" stroke-width="0.15" font-family="Liberation Sans" transform="rotate(-45 2387.0 1263.0)">2025-12-14</text>
<text x="2425.2" y="1263.0" text-anchor="end" font-size="17.6" fill="#5c5c5c" stroke="#5c5c5c" stroke-width="0.15" font-family="Liberation Sans" transform="rotate(-45 2425.2 1263.0)">2025-12-15</text>
<text x="2463.3" y="1263.0" text-anchor="end" font-size="17.6" fill="#5c5c5c" stroke="#5c5c5c" stroke-width="0.15" font-family="Liberation Sans" transform="rotate(-45 2463.3 1263.0)">2025-12-16</text>
<text x="2501.5" y="1263.0" text-anchor="end" font-size="17.6" fill="#5c5c5c" stroke="#5c5c5c" stroke-width="0.15" font-family="Liberation Sans" transform="rotate(-45 2501.5 1263.0)">2025-12-17</text>
</svg>
<div class="a" style="left:124px;top:91px;width:410px;height:261px;border-radius:6px;background:#fff;box-shadow:0 10px 10px -6px rgba(0,0,0,.2),0 16px 20px 2px rgba(0,0,0,.14),0 6px 28px 4px rgba(0,0,0,.12)"></div>
<div class="t" style="left:148.7px;top:124.9px;font-size:20.5px;color:#a0a0a0;font-weight:normal;letter-spacing:-0.7px;-webkit-text-stroke:0.1px">Search</div>

<svg class="a" style="left:474px;top:116px" width="34" height="34" viewBox="474 116 34 34"><circle cx="488.4" cy="130.6" r="7.4" stroke="#6a6a6a" stroke-width="2.2" fill="none"/><path d="M493.8 136 L502.6 144.8" stroke="#6a6a6a" stroke-width="2.4" stroke-linecap="square"/></svg>
<div class="a" style="left:124px;top:166px;width:410px;height:1px;background:#dfe3e8"></div>
<div class="t" style="left:150.5px;top:182.1px;font-size:27px;color:#1a1a1a;font-weight:normal;letter-spacing:-0.3px;">All</div>

<div class="t" style="left:149.5px;top:240.4px;font-size:26px;color:#1a1a1a;font-weight:normal;letter-spacing:0.25px;">default-org</div>

<div class="t" style="left:149.0px;top:298.2px;font-size:26px;color:#1a1a1a;font-weight:normal;letter-spacing:0.05px;">tenant-org</div>

<div class="a" style="left:94px;top:0px;width:442px;height:350px;border:10px solid #ff5a4b;filter:drop-shadow(0 5.5px 2.5px rgba(0,0,0,0.62))"></div>
</body></html>
